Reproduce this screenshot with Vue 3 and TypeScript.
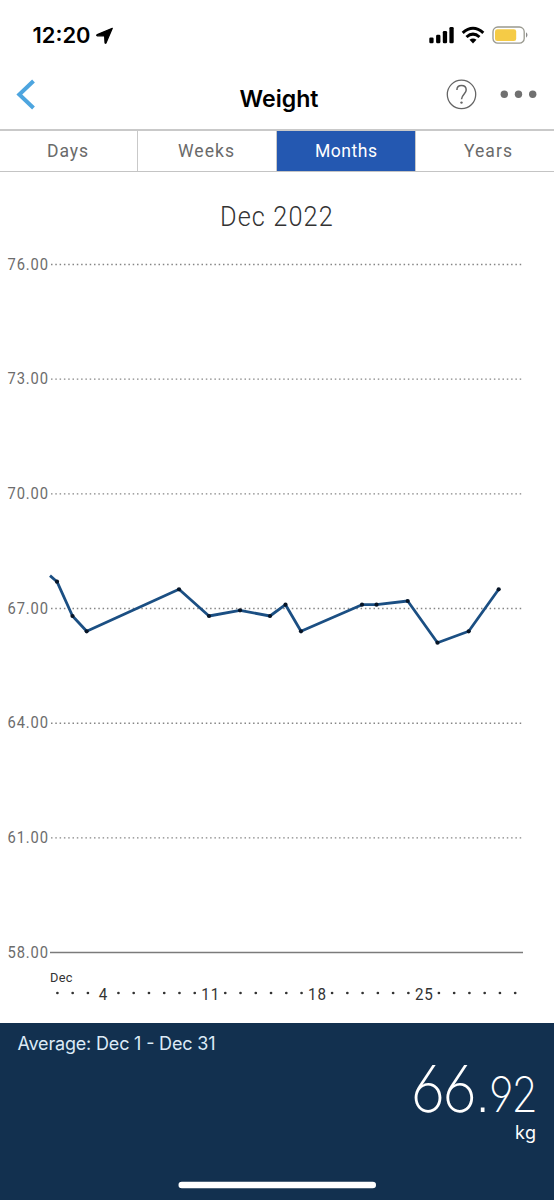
<script setup lang="ts">
interface Point { x: number; y: number }

const tabs = [
  { name: 'Days', width: 41 },
  { name: 'Weeks', width: 56 },
  { name: 'Months', width: 62 },
  { name: 'Years', width: 48 },
]
const active = 'Months'
const CHART_TOP = 172
const grid = [76, 73, 70, 67, 64, 61].map((v, i) => ({ label: v.toFixed(2), y: 264.5 - CHART_TOP + i * 114.67 }))
const scaleLabels = [...grid, { label: '58.00', y: 780.7 }]
const points: Point[] = [
  [57, 581.7], [72.5, 616], [86.7, 631.3], [179, 589.3], [209, 616], [240, 610.3], [270, 616], [285.5, 604.7],
  [301, 631.3], [362, 604.7], [376.5, 604.7], [407.7, 601], [437.5, 642.7], [468.7, 631.3], [498.7, 589.3],
].map(([x, y]) => ({ x, y: y - CHART_TOP }))
const line = `50,${575.6 - CHART_TOP} ` + points.map((p) => `${p.x},${p.y}`).join(' ')
const days = Array.from({ length: 31 }, (_, i) => ({ day: i + 1, x: 57.4 + i * 15.26, labelled: [4, 11, 18, 25].includes(i + 1) }))
</script>

<template>
  <main class="screen">
    <header class="status">
      <svg width="554" height="70" viewBox="0 0 554 70">
        <text class="time" x="32.500" y="43" textLength="58" lengthAdjust="spacingAndGlyphs">12:20</text>
        <path d="M112.300 28.300 L97.300 34.600 Q95.900 35.400 97.500 35.800 L104.600 36 L105 42.500 Q105.400 44 106.200 42.600 Z" fill="#000" stroke="#000" stroke-width="1.200" stroke-linejoin="round" />
        <g fill="#000">
          <rect x="429.300" y="37.500" width="4.300" height="5.800" rx="1.300" />
          <rect x="436.100" y="34.700" width="4.300" height="8.600" rx="1.300" />
          <rect x="442.800" y="31" width="4.300" height="12.300" rx="1.300" />
          <rect x="449.400" y="27" width="4.300" height="16.300" rx="1.300" />
        </g>
        <g fill="none" stroke="#000" stroke-width="3">
          <path d="M462.700 32.900 Q473 23.600 483.300 32.900" />
          <path d="M466.500 37 Q473 31.200 479.500 37" />
        </g>
        <path d="M469.500 39.800 Q473 37 476.500 39.800 L473 43.400 Z" />
        <rect x="493" y="27" width="31.200" height="16.200" rx="4.800" fill="#fff" stroke="#99998f" stroke-width="1.300" />
        <rect x="495" y="29.200" width="21.200" height="11.800" rx="2.300" fill="#f5cb46" />
        <path d="M526 32.300 Q529 35 526 37.700 Z" fill="#888" />
      </svg>
    </header>
    <nav class="navbar">
      <svg width="554" height="59" viewBox="0 70 554 59">
        <path d="M33.500 81 L19.300 94.500 L33.500 108" fill="none" stroke="#4da5df" stroke-width="4" />
        <text class="title" x="239.500" y="107" textLength="79" lengthAdjust="spacingAndGlyphs">Weight</text>
        <circle cx="461.500" cy="94.400" r="14.200" fill="none" stroke="#656565" stroke-width="1.300" />
        <path d="M456.900 90 C456.900 87 458.800 85.500 461.500 85.500 C464.300 85.500 466.200 87.300 466.200 90 C466.200 93.500 461.700 94.500 461.500 99.300" fill="none" stroke="#656565" stroke-width="1.500" />
        <circle cx="461.500" cy="102.600" r="1.200" fill="#656565" />
        <circle v-for="x in [504.300, 518.500, 532.700]" :key="x" :cx="x" cy="94.300" r="3.700" fill="#707070" />
      </svg>
    </nav>
    <div class="tabs">
      <button v-for="tab in tabs" :key="tab.name" :class="['tab', { active: tab.name === active }]">
        <svg class="tab-label" :width="tab.width" height="40"><text class="tab-text" transform="scale(0.950 1)" x="0" y="26" :textLength="tab.width / 0.950">{{ tab.name }}</text></svg>
      </button>
    </div>
    <section class="chart">
      <svg width="554" height="851" viewBox="0 0 554 851">
        <text class="period" transform="translate(220 54) scale(0.920 1)" textLength="122.500">Dec 2022</text>
        <text v-for="s in scaleLabels" :key="s.label" class="scale" :transform="`translate(7.500 ${s.y + 5.300}) scale(0.920 1)`" textLength="44">{{ s.label }}</text>
        <line v-for="g in grid" :key="g.label" x1="51" x2="522" :y1="g.y" :y2="g.y" class="dotted" />
        <line x1="50" x2="523" y1="780.500" y2="780.500" stroke="#7b7b7b" stroke-width="1.300" />
        <polyline :points="line" fill="none" stroke="#1b4f83" stroke-width="2.800" stroke-linejoin="round" />
        <circle v-for="p in points" :key="p.x" :cx="p.x" :cy="p.y" r="2.100" fill="#071527" />
        <text class="month" transform="translate(50 809.500) scale(0.950 1)" textLength="23.700">Dec</text>
        <template v-for="d in days" :key="d.day">
          <text v-if="d.labelled" class="day" :transform="`translate(${d.x - (d.day === 4 ? 4.500 : 8.700)} 827.500) scale(0.920 1)`" :textLength="d.day === 4 ? 9.300 : 19.500">{{ d.day }}</text>
          <circle v-else :cx="d.x" cy="821" r="1.350" fill="#333" />
        </template>
      </svg>
    </section>
    <footer class="summary">
      <svg width="554" height="177" viewBox="0 1023 554 177">
        <text class="range" x="17.500" y="1050" textLength="198">Average: Dec 1 - Dec 31</text>
        <text class="whole" transform="translate(410.500 1112) scale(0.960 1)" textLength="69.500">66</text>
        <rect x="480.800" y="1107.500" width="3.700" height="4.500" fill="#fff" />
        <text class="decimal" transform="translate(489 1112) scale(0.880 1)" textLength="55.500">92</text>
        <text class="unit" x="515" y="1139" textLength="21">kg</text>
        <rect x="178.500" y="1181.700" width="197.500" height="6.600" rx="3.300" fill="#fff" />
      </svg>
    </footer>
  </main>
</template>

<style>
body { margin: 0; background: #fff; }
</style>

<style scoped>
.screen { width: 554px; height: 1200px; display: flex; flex-direction: column; overflow: hidden; background: #fff; font-family: Roboto, "Liberation Sans", sans-serif; }
svg { display: block; }
.status { height: 70px; }
.navbar { height: 59px; }
.time { font: 600 21.500px Inter, sans-serif; }
.title { font: 600 23px Inter, sans-serif; }
.tabs { display: grid; grid-template-columns: 137.500px 139.500px 138.500px 138.500px; height: 43px; box-sizing: border-box; border-top: 2px solid #c9c9c9; border-bottom: 1px solid #c4c4c4; }
.tab { padding: 0 1px 0 0; border: 0; border-right: 1px solid #c9c9c9; background: #fff; display: flex; justify-content: center; color: #6a6a6a; }
.tab:last-child { border-right: 0; padding: 0 0 0 6px; }
.tab.active { background: #2458b1; color: #fff; padding: 0; }
.tab-label { overflow: visible; }
.tab-text { font: 400 18.500px Roboto, sans-serif; fill: currentColor; }
.chart { height: 851px; }
.period { font: 300 27.500px Roboto, sans-serif; fill: #333; }
.scale { font: 400 16px Roboto, sans-serif; fill: #6c6c6c; }
.dotted { stroke: #858585; stroke-width: 1.400; stroke-dasharray: 1.500 2.800; }
.month { font: 400 13.500px Roboto, sans-serif; fill: #333; }
.day { font: 400 16.500px Roboto, sans-serif; fill: #333; }
.summary { height: 177px; background: #12304f; }
.range { font: 400 18px Inter, sans-serif; fill: #dceaf6; }
.whole { font: 200 64px Inter, sans-serif; font-feature-settings: "cv03", "cv04", "cv05", "cv06", "ss01"; fill: #fff; }
.decimal { font: 200 48.500px Inter, sans-serif; font-feature-settings: "cv03", "cv04", "ss01"; fill: #fff; }
.unit { font: 400 18px Inter, sans-serif; fill: #fff; }
</style>
